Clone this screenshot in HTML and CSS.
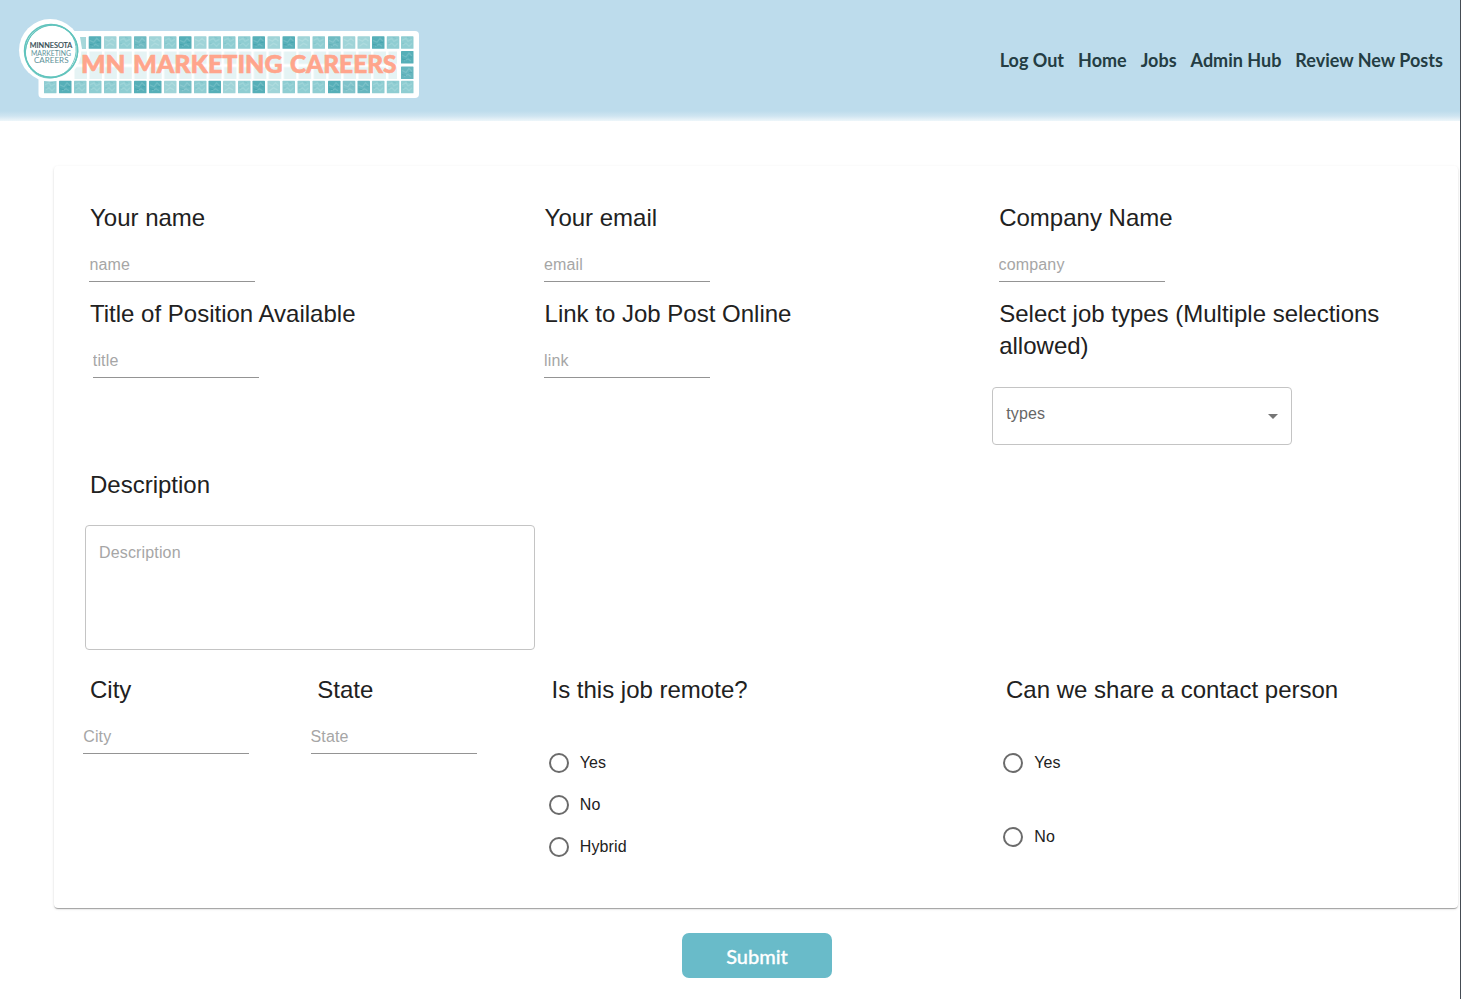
FILE: index.html
```
<!DOCTYPE html>
<html lang="en">
<head>
<meta charset="utf-8">
<title>MN Marketing Careers</title>
<link rel="stylesheet" href="styles.css">
</head>
<body>
<div class="page">
  <header class="header">
    <svg class="logo" width="404" height="84" viewBox="17 16 404 84" role="img" aria-label="MN Marketing Careers">
      <defs>
        <g id="tile"><rect width="12.500" height="12.500" rx=".6" fill="#8fcdd2"/><path d="M1 4l4-2 2 3 4-2M2 9l3-2 3 3 3-3" fill="none" stroke="#9dd4d8" stroke-width="1.300"/><path d="M6 1l3 1M1 7h2" stroke="#82c5cb"/></g>
        <g id="light"><rect width="12.500" height="12.500" rx=".6" fill="#a0d4d8"/><path d="M1 3l4 2 3-3 3 3M2 10l4-3 4 2" fill="none" stroke="#aedbde" stroke-width="1.300"/></g>
        <g id="dark"><rect width="12.500" height="12.500" rx=".6" fill="#56afb8"/><path d="M1 4l4 2 3-4 3 3M3 10l4-2 3 2" fill="none" stroke="#6ebbc3" stroke-width="1.300"/><path d="M1 8l4 1M8 6h3" stroke="#48a4af"/></g>
        <pattern id="pale" x="74" y="51" width="14.95" height="15.5" patternUnits="userSpaceOnUse"><rect x=".5" y=".5" width="12.5" height="12.5" fill="#e5f3f4"/></pattern>
        <filter id="soft"><feGaussianBlur stdDeviation=".5"/></filter>
      </defs>
      <rect x="38.500" y="31" width="380.500" height="67" rx="4" fill="#fff"/>
      <rect x="74" y="51" width="323" height="28" fill="url(#pale)"/>
      <g filter="url(#soft)">
        <path d="M80 37h6v12h-4z" fill="#a6d7da"/>
        <use href="#dark" x="88.700" y="36.300"/><use href="#light" x="104" y="36.300"/><use href="#tile" x="119" y="36.300"/><use href="#dark" x="134" y="36.300" opacity=".85"/><use href="#light" x="149" y="36.300"/><use href="#tile" x="164" y="36.300"/><use href="#dark" x="179" y="36.300"/><use href="#light" x="194" y="36.300"/><use href="#tile" x="208.500" y="36.300"/><use href="#tile" x="223" y="36.300"/><use href="#tile" x="238" y="36.300"/><use href="#dark" x="252.500" y="36.300"/><use href="#light" x="267.500" y="36.300"/><use href="#dark" x="282.500" y="36.300"/><use href="#light" x="297.500" y="36.300"/><use href="#tile" x="312.500" y="36.300"/><use href="#dark" x="328" y="36.300" opacity=".85"/><use href="#light" x="342.800" y="36.300"/><use href="#light" x="357.500" y="36.300"/><use href="#dark" x="372" y="36.300"/><use href="#tile" x="386.800" y="36.300"/><use href="#tile" x="401" y="36.300"/>
        <use href="#dark" x="401" y="51"/><use href="#dark" x="401" y="66.500" opacity=".9"/>
        <use href="#tile" x="44" y="80.800"/><use href="#dark" x="59" y="80.800"/><use href="#tile" x="74" y="80.800"/><use href="#tile" x="89" y="80.800"/><use href="#tile" x="104" y="80.800"/><use href="#tile" x="119" y="80.800"/><use href="#dark" x="134" y="80.800"/><use href="#dark" x="149" y="80.800"/><use href="#light" x="164" y="80.800"/><use href="#dark" x="179" y="80.800" opacity=".8"/><use href="#tile" x="194" y="80.800"/><use href="#dark" x="208.500" y="80.800"/><use href="#light" x="223" y="80.800"/><use href="#tile" x="238" y="80.800"/><use href="#dark" x="252.500" y="80.800"/><use href="#light" x="267.500" y="80.800"/><use href="#tile" x="282.500" y="80.800"/><use href="#tile" x="297.500" y="80.800"/><use href="#tile" x="312.500" y="80.800"/><use href="#dark" x="328" y="80.800"/><use href="#dark" x="342.800" y="80.800" opacity=".75"/><use href="#dark" x="357.500" y="80.800" opacity=".9"/><use href="#tile" x="372" y="80.800"/><use href="#tile" x="386.800" y="80.800"/><use href="#tile" x="401" y="80.800"/>
      </g>
      <circle cx="50.200" cy="50.300" r="31.200" fill="#fff"/>
      <g fill="none" stroke="#62c4bd" filter="url(#soft)"><circle cx="51" cy="51" r="26.500" stroke-width="1.500"/><ellipse cx="51.500" cy="51.500" rx="26.500" ry="25.500" stroke-width="1" transform="rotate(-30 51 51)"/><ellipse cx="51" cy="51.500" rx="25" ry="27" stroke-width=".8" transform="rotate(25 51 51)"/></g>
      <text class="logo-small logo-dark" x="29.800" y="47.800" textLength="42.400" lengthAdjust="spacingAndGlyphs">MINNESOTA</text>
      <text class="logo-small" x="31" y="56.300" textLength="40" lengthAdjust="spacingAndGlyphs">MARKETING</text>
      <text class="logo-small" x="34" y="62.900" textLength="34.500" lengthAdjust="spacingAndGlyphs">CAREERS</text>
      <text class="logo-title" x="81" y="72.700" textLength="44.500" lengthAdjust="spacingAndGlyphs">MN</text>
      <text class="logo-title" x="133" y="72.700" textLength="149.500" lengthAdjust="spacingAndGlyphs">MARKETING</text>
      <text class="logo-title" x="290" y="72.700" textLength="106.500" lengthAdjust="spacingAndGlyphs">CAREERS</text>
    </svg>
    <nav class="nav"><a>Log Out</a><a>Home</a><a>Jobs</a><a>Admin Hub</a><a>Review New Posts</a></nav>
  </header>
  <form class="form">
    <div class="card">
      <section class="row row-contact">
        <div><h2 class="label">Your name</h2><input class="input" placeholder="name"></div>
        <div><h2 class="label">Your email</h2><input class="input" placeholder="email"></div>
        <div><h2 class="label">Company Name</h2><input class="input" placeholder="company"></div>
      </section>
      <section class="row row-position">
        <div><h2 class="label">Title of Position Available</h2><input class="input input-title" placeholder="title"></div>
        <div><h2 class="label">Link to Job Post Online</h2><input class="input" placeholder="link"></div>
        <div><h2 class="label">Select job types (Multiple selections allowed)</h2>
          <div class="select"><span>types</span><svg width="24" height="24" viewBox="0 0 24 24"><path d="M7 10l5 5 5-5z" fill="#757575"/></svg></div>
        </div>
      </section>
      <section class="row-description">
        <h2 class="label">Description</h2>
        <textarea class="textarea" placeholder="Description"></textarea>
      </section>
      <section class="row-location">
        <div><h2 class="label">City</h2><input class="input input-place" placeholder="City"></div>
        <div><h2 class="label">State</h2><input class="input input-place" placeholder="State"></div>
        <div><h2 class="label label-radio">Is this job remote?</h2>
          <div class="radios"><label class="radio"><i class="dot"></i>Yes</label><label class="radio"><i class="dot"></i>No</label><label class="radio"><i class="dot"></i>Hybrid</label></div>
        </div>
        <div><h2 class="label label-radio">Can we share a contact person</h2>
          <div class="radios radios-wide"><label class="radio"><i class="dot"></i>Yes</label><label class="radio"><i class="dot"></i>No</label></div>
        </div>
      </section>
    </div>
    <button class="submit" type="button">Submit</button>
  </form>
</div>
</body>
</html>
```
FILE: styles.css
```
* { box-sizing: border-box; }
body { margin: 0; background: #fff; overflow: hidden; }
.page {
  height: 999px;
  border-right: 1px solid #454c54;
  font-family: "Liberation Sans", Arial, sans-serif;
  color: #212121;
}
.header {
  display: flex;
  justify-content: space-between;
  height: 121px;
  padding: 16px 17px 0;
  background: linear-gradient(#bddcec 0, #bddcec 111px, #cfe5f1 116px, #eef6fa 121px);
}
.logo { display: block; }
.logo-small { font: 7.2px Lato, sans-serif; fill: #5d9299; }
.logo-dark { fill: #324b52; stroke: #324b52; stroke-width: .2px; }
.logo-title { font: 900 24.500px Lato, sans-serif; fill: #ffa58c; stroke: #ffa58c; stroke-width: .6px; }
.nav {
  display: flex;
  gap: 14px;
  padding: 32px .2px 0 0;
  font: 700 18px/24px Lato, sans-serif;
  color: #243d43;
  white-space: nowrap;
}
.form { display: flex; flex-direction: column; padding: 45px 2px 0 54px; }
.card {
  height: 742px;
  padding: 36px 0 0 36px;
  border-radius: 4px;
  box-shadow: 0 2px 1px -1px rgba(0,0,0,.2), 0 1px 1px rgba(0,0,0,.14), 0 1px 3px rgba(0,0,0,.12);
}
.row { display: grid; grid-template-columns: repeat(3, 454.600px); }
.row-contact { height: 96px; }
.row-position { height: 171px; }
.row-description { height: 205px; }
.row-location { display: grid; grid-template-columns: 227.300px 227.200px 454.500px 454px; }
.label {
  max-width: 400px;
  margin: 0;
  font-size: 24px;
  font-weight: 400;
  line-height: 32px;
}
.label-radio { margin-left: 7px; }
.input {
  display: block;
  width: 166px;
  height: 32px;
  margin: 16px 0 0 -.600px;
  padding: 4px 0 5px;
  border: 0;
  border-bottom: 1px solid #949494;
  background: transparent;
  font: 16px/23px "Liberation Sans", Arial, sans-serif;
  letter-spacing: .15px;
}
.input-title { margin-left: 2.800px; }
.input-place { margin-left: -6.800px; }
.input::placeholder, .textarea::placeholder { color: #a6a6a6; opacity: 1; }
.select {
  display: flex;
  justify-content: space-between;
  width: 300px;
  height: 58px;
  margin: 25px 0 0 -7px;
  padding: 14px 6px 0 13px;
  border: 1px solid #c4c4c4;
  border-radius: 4px;
  color: #666;
  font-size: 16px;
  line-height: 23px;
  letter-spacing: .15px;
}
.select svg { margin-top: 2px; }
.textarea {
  display: block;
  width: 450px;
  height: 125px;
  margin: 24px 0 0 -5px;
  padding: 15px 13px;
  border: 1px solid #c4c4c4;
  border-radius: 4px;
  resize: none;
  font: 16px/23px "Liberation Sans", Arial, sans-serif;
  letter-spacing: .15px;
}
.radios { display: flex; flex-direction: column; padding-top: 36px; }
.radios-wide { gap: 32px; }
.radio {
  display: flex;
  align-items: center;
  gap: 11px;
  height: 42px;
  margin-left: 4.200px;
  font-size: 16px;
  line-height: 24px;
  letter-spacing: .15px;
}
.dot { width: 20px; height: 20px; border: 2px solid #6b6b6b; border-radius: 50%; }
.submit {
  align-self: center;
  width: 150px;
  height: 45px;
  margin: 25px 0 0 2px;
  padding: 1px 0 0;
  border: 0;
  border-radius: 7px;
  background: #69bbc9;
  color: #fff;
  font: 500 20px Lato, sans-serif;
  -webkit-text-stroke: .3px #fff;
}
```
